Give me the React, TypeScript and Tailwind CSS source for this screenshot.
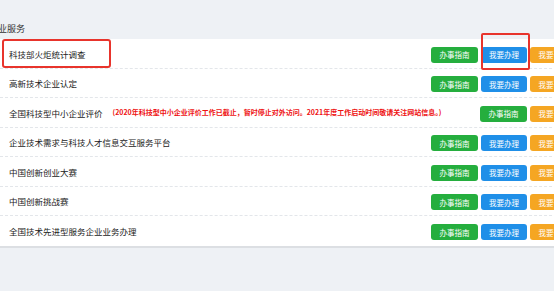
import React from "react";

type Row = { label: string; note?: string; blue: boolean; box?: boolean };

const rows: Row[] = [
  { label: "科技部火炬统计调查", blue: true, box: true },
  { label: "高新技术企业认定", blue: true },
  {
    label: "全国科技型中小企业评价",
    note: "(2020年科技型中小企业评价工作已截止，暂时停止对外访问。2021年度工作启动时间敬请关注网站信息。)",
    blue: false,
  },
  { label: "企业技术需求与科技人才信息交互服务平台", blue: true },
  { label: "中国创新创业大赛", blue: true },
  { label: "中国创新挑战赛", blue: true },
  { label: "全国技术先进型服务企业业务办理", blue: true },
];

const font = { fontFamily: '"Noto Sans CJK SC", "Noto Sans", sans-serif' };

export default function App() {
  return (
    <div
      className="w-[554px] h-[291px] bg-[#eef1f5] overflow-hidden relative"
      style={font}
    >
      <div className="h-[39px] flex items-start pt-[22px] pl-0">
        <span className="text-[9px] leading-[14px] text-[#333] -ml-[2px]">业服务</span>
      </div>
      <div className="w-[587px] bg-white border-b-2 border-[#dcdfe3]">
        {rows.map((r, i) => (
          <div
            key={i}
            className={
              "relative h-[29.5px] flex items-center pl-[9px] pr-[10px] " +
              (i < rows.length - 1 ? "border-b border-dashed border-[#e3e6ea]" : "")
            }
          >
            {r.box && (
              <div className="absolute left-[2px] top-0 w-[109px] h-[29px] border-2 border-[#e8342c] rounded-[3px]" />
            )}
            <span className="text-[8.5px] leading-none text-[#222] whitespace-nowrap mt-[1px]">{r.label}</span>
            {r.note && (
              <span className="ml-[10px] text-[7px] leading-none font-bold text-[#ee1111] whitespace-nowrap">
                {r.note}
              </span>
            )}
            <div className="flex-1" />
            <div className="flex gap-[3px] mt-[3px]">
              <button className="w-[47px] h-[16px] rounded-[3px] bg-[#25ae3e] text-white text-[7.5px] leading-none flex items-center justify-center">
                办事指南
              </button>
              {r.blue && (
                <div className="relative">
                  <button className="w-[46px] h-[16px] rounded-[3px] bg-[#1f8fe8] text-white text-[7.5px] leading-none flex items-center justify-center">
                    我要办理
                  </button>
                  {r.box && (
                    <div className="absolute left-0 -top-[14px] w-[49px] h-[37px] border-2 border-[#e8342c] rounded-[2px]" />
                  )}
                </div>
              )}
              <button className="w-[47px] h-[16px] rounded-[3px] bg-[#f5a623] text-white text-[7.5px] leading-none flex items-center justify-center">
                我要咨询
              </button>
            </div>
          </div>
        ))}
      </div>
    </div>
  );
}
